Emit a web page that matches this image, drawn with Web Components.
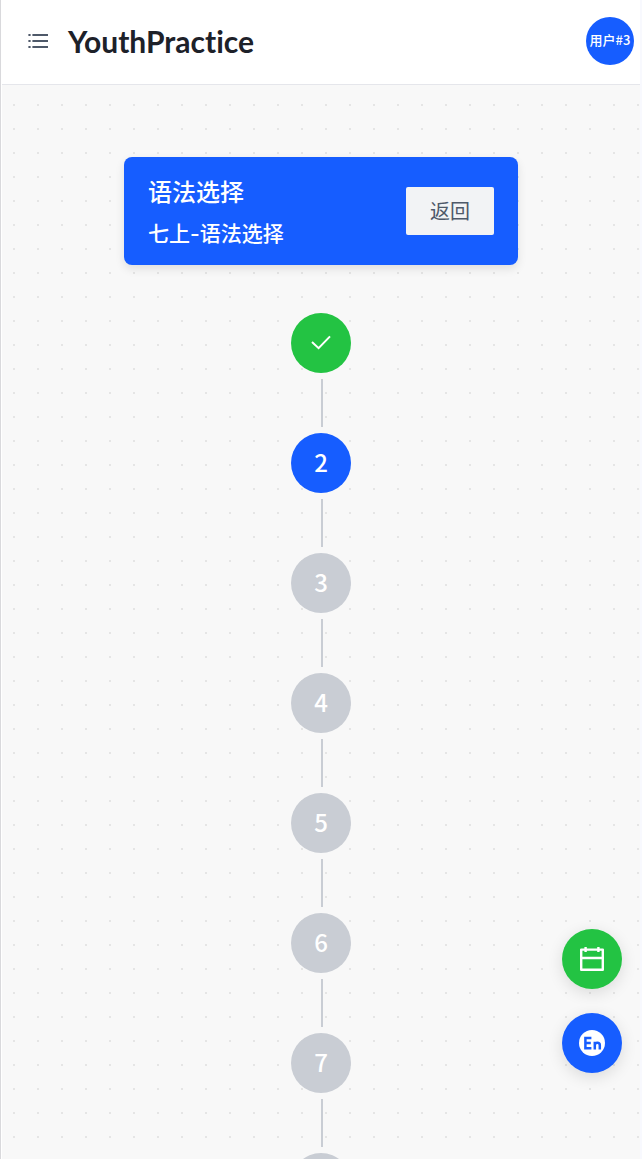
<!DOCTYPE html>
<html lang="zh-CN">
<head>
<meta charset="utf-8">
<meta name="viewport" content="width=device-width, initial-scale=1">
<title>YouthPractice</title>
<style>
  body { margin: 0; font-family: "Noto Sans CJK SC", sans-serif; color: #1d2129; }
</style>
</head>
<body>
<practice-app>
  <app-header slot="header" brand="YouthPractice" user="用户#3"></app-header>
  <unit-card heading="语法选择" subtitle="七上-语法选择"></unit-card>
  <step-list>
    <step-node state="done" number="1"></step-node>
    <step-node state="current" number="2"></step-node>
    <step-node number="3"></step-node>
    <step-node number="4"></step-node>
    <step-node number="5"></step-node>
    <step-node number="6"></step-node>
    <step-node number="7"></step-node>
    <step-node number="8"></step-node>
  </step-list>
  <float-button slot="float" label="日历" style="--fill: #23c343">
    <svg width="28" height="28" viewBox="0 0 28 28" fill="none" stroke="#fff" stroke-width="2.4"><path stroke-linejoin="round" d="M3.2 4.6h21.6v20.2H3.2zM3.2 13h21.6M7.6 2v5M20.4 2v5"/></svg>
  </float-button>
  <float-button slot="float" label="英语" style="--fill: #165dff">
    <svg width="28" height="28" viewBox="0 0 28 28" fill="none"><circle cx="14" cy="14" r="13" fill="#fff"/><path d="M13.4 9H7.4v10.2h6M7.4 14h5.4M16.8 20.4v-7.6M16.8 16.2c0-3.2 5-3.2 5 0v4.2" stroke="#165dff" stroke-width="2.5"/></svg>
  </float-button>
</practice-app>
<script>
  class BaseElement extends HTMLElement {
    constructor() {
      super();
      this.attachShadow({ mode: "open" });
    }
    connectedCallback() {
      this.shadowRoot.innerHTML = this.render();
    }
    attr(name) {
      return this.getAttribute(name) || "";
    }
  }

  customElements.define("practice-app", class extends BaseElement {
    render() {
      return `<style>
        :host { display: flex; flex-direction: column; height: 100vh; box-sizing: border-box; padding-left: 1px;
          border-left: 1px solid #d9d9dc; border-right: 2px solid #f8f9fe; background: #fff; }
        main { flex: 1; min-height: 0; overflow-y: auto; scrollbar-width: none; padding: 72px 24px 24px;
          background: conic-gradient(from 270deg at 2px 2px, #e5e5e5 90deg, transparent 0) 11px 19px / 24px 24px #f8f8f8; }
        aside { position: fixed; right: 20px; bottom: 86px; display: flex; flex-direction: column; gap: 24px; }
      </style>
      <slot name="header"></slot>
      <main><slot></slot></main>
      <aside><slot name="float"></slot></aside>`;
    }
  });

  customElements.define("app-header", class extends BaseElement {
    render() {
      return `<style>
        :host { display: block; background: #fff; border-bottom: 1px solid #e5e6eb; }
        header { display: flex; align-items: center; height: 84px; padding: 0 6px 2px 24px; box-sizing: border-box; }
        button { border: 0; padding: 0; background: none; font: inherit; display: flex; }
        h1 { flex: 1; margin: 0 0 0 18px; font-family: Lato, sans-serif; font-size: 30px; line-height: 40px;
          font-weight: 700; font-variant-ligatures: none; }
        .avatar { width: 48px; height: 48px; border-radius: 50%; background: #165dff; color: #fff; box-sizing: border-box;
          padding-bottom: 2px; align-items: center; justify-content: center; font-size: 13px; line-height: 20px; font-weight: 500; white-space: nowrap; }
      </style>
      <header>
        <button aria-label="菜单"><svg width="24" height="24" viewBox="0 0 24 24" stroke="#4e5969" stroke-width="2"><path d="M2.4 6h2.2M2.4 12h2.2M2.4 18h2.2M6.4 6H22M6.4 12H22M6.4 18H22"/></svg></button>
        <h1>${this.attr("brand")}</h1>
        <button class="avatar">${this.attr("user")}</button>
      </header>`;
    }
  });

  customElements.define("unit-card", class extends BaseElement {
    render() {
      return `<style>
        :host { display: block; max-width: 394px; margin: 0 auto; }
        section { display: flex; align-items: center; justify-content: space-between; padding: 14px 24px 8px;
          border-radius: 8px; background: #165dff; color: #fff; box-shadow: 0 4px 10px rgba(0, 0, 0, .1); }
        h2, p { margin: 0; font-weight: 500; }
        h2 { font-size: 24px; line-height: 40px; }
        p { font-family: Inter, "Noto Sans CJK SC", sans-serif; font-size: 21px; line-height: 46px; }
        button { height: 48px; margin-top: -6px; padding: 0 24px; border: 0; border-radius: 2px; background: #f2f3f5;
          color: #4e5969; font: inherit; font-size: 20px; line-height: 30px; }
      </style>
      <section>
        <div><h2>${this.attr("heading")}</h2><p>${this.attr("subtitle")}</p></div>
        <button>返回</button>
      </section>`;
    }
  });

  customElements.define("step-list", class extends BaseElement {
    render() {
      return `<style>
        :host { display: flex; flex-direction: column; align-items: center; margin-top: 48px; }
      </style><slot></slot>`;
    }
  });

  customElements.define("step-node", class extends BaseElement {
    render() {
      const done = this.attr("state") === "done";
      const face = done
        ? `<svg width="24" height="24" viewBox="0 0 24 24" fill="none" stroke="#fff" stroke-width="2"><path d="M3 12l6.6 6.2L21 6.4"/></svg>`
        : this.attr("number");
      return `<style>
        :host { display: flex; flex-direction: column; align-items: center; gap: 6px; height: 120px; --fill: #c9cdd4; }
        :host([state="done"]) { --fill: #23c343; }
        :host([state="current"]) { --fill: #165dff; }
        button { display: flex; align-items: center; justify-content: center; flex: none; width: 60px; height: 60px;
          box-sizing: border-box; border: 0; border-radius: 50%; padding: 0 0 2px; background: var(--fill); color: #fff;
          font: inherit; font-size: 24px; line-height: 24px; font-weight: 500; }
        :host::after { content: ""; width: 2px; height: 48px; margin-left: 2px; background: #c9cdd4; }
        :host(:last-child)::after { display: none; }
      </style>
      <button aria-label="第${this.attr("number")}关">${face}</button>`;
    }
  });

  customElements.define("float-button", class extends BaseElement {
    render() {
      return `<style>
        :host { display: block; }
        button { display: flex; align-items: center; justify-content: center; width: 60px; height: 60px; padding: 0;
          border: 0; border-radius: 50%; background: var(--fill); box-shadow: 0 4px 16px rgba(0, 0, 0, .12); }
      </style>
      <button aria-label="${this.attr("label")}"><slot></slot></button>`;
    }
  });
</script>
</body>
</html>
